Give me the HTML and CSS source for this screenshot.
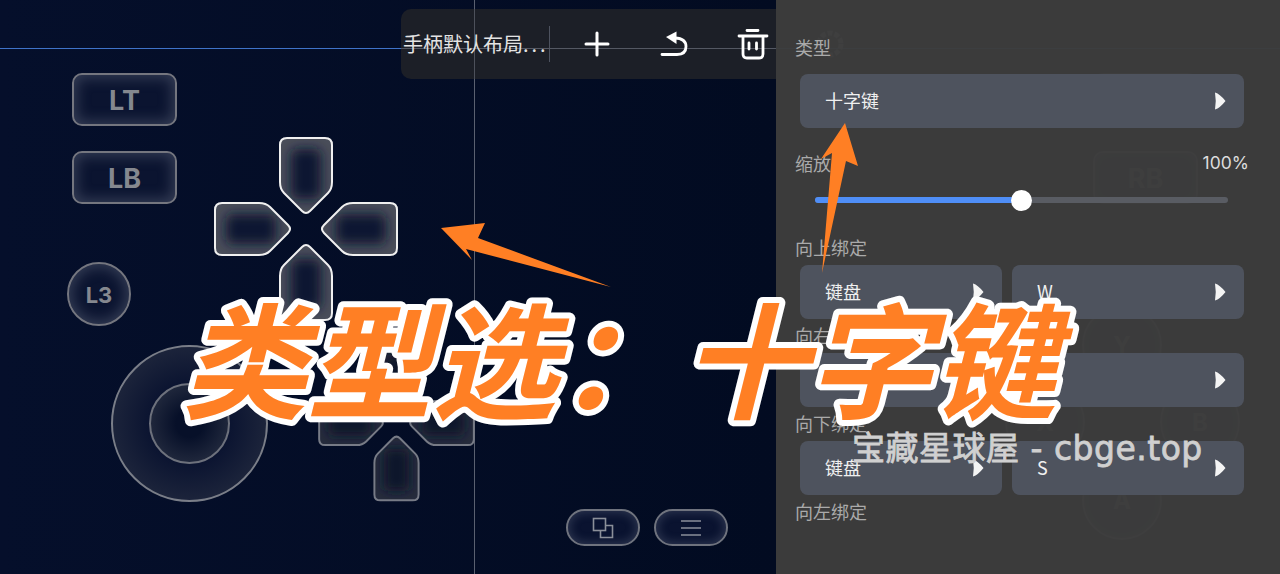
FILE: index.html
```html
<!DOCTYPE html>
<html lang="zh-CN">
<head>
    <meta charset="UTF-8">
    <title>手柄布局编辑</title>
    <link rel="stylesheet" href="styles.css">
</head>
<body>
    <div class="screen">
        <!-- guide lines -->
        <div class="guide guide-h"></div>
        <div class="guide guide-v"></div>

        <!-- pads on the canvas -->
        <div class="pad pad-rect pad-lt">LT</div>
        <div class="pad pad-rect pad-lb">LB</div>
        <div class="pad pad-round pad-l3">L3</div>
        <div class="stick"><div class="stick-inner"></div></div>

        <div class="pad pad-rect pad-rt">RT</div>
        <div class="pad pad-rect pad-rb">RB</div>
        <div class="pad pad-round pad-face pad-y">Y</div>
        <div class="pad pad-round pad-face pad-x">X</div>
        <div class="pad pad-round pad-face pad-b">B</div>
        <div class="pad pad-round pad-face pad-a">A</div>

        <svg class="gear" width="28" height="28" viewBox="0 0 28 28">
            <circle cx="14" cy="14" r="11" stroke-dasharray="5 2"></circle>
        </svg>

        <svg class="dpads" width="776" height="574" viewBox="0 0 776 574">
            <defs>
                <filter id="soft" x="-60%" y="-60%" width="220%" height="220%">
                    <feGaussianBlur stdDeviation="6"></feGaussianBlur>
                </filter>
                <clipPath id="armClip">
                    <path d="M-19 -91H19Q26 -91 26 -84V-47Q26 -40 22 -36L4 -18Q0 -14 -4 -18L-22 -36Q-26 -40 -26 -47V-84Q-26 -91 -19 -91Z"></path>
                </clipPath>
                <g id="arm">
                    <path class="arm-fill" d="M-19 -91H19Q26 -91 26 -84V-47Q26 -40 22 -36L4 -18Q0 -14 -4 -18L-22 -36Q-26 -40 -26 -47V-84Q-26 -91 -19 -91Z"></path>
                    <g clip-path="url(#armClip)">
                        <rect class="arm-core" x="-15" y="-80" width="30" height="50" rx="6" filter="url(#soft)"></rect>
                    </g>
                    <path class="arm-line" d="M-19 -91H19Q26 -91 26 -84V-47Q26 -40 22 -36L4 -18Q0 -14 -4 -18L-22 -36Q-26 -40 -26 -47V-84Q-26 -91 -19 -91Z"></path>
                </g>
            </defs>
            <g class="dpad-on" transform="translate(306 229)">
                <use href="#arm"></use>
                <use href="#arm" transform="rotate(90)"></use>
                <use href="#arm" transform="rotate(180)"></use>
                <use href="#arm" transform="rotate(270)"></use>
            </g>
            <g class="dpad-off" transform="translate(396.5 423) scale(.85)">
                <use href="#arm"></use>
                <use href="#arm" transform="rotate(90)"></use>
                <use href="#arm" transform="rotate(180)"></use>
                <use href="#arm" transform="rotate(270)"></use>
            </g>
        </svg>

        <div class="pill pill-copy">
            <svg width="24" height="24" viewBox="0 0 24 24">
                <rect class="pill-icon" x="2.5" y="2.5" width="12" height="12"></rect>
                <path class="pill-icon" d="M14.5 9.5H21.5V21.5H9.5V14.5"></path>
            </svg>
        </div>
        <div class="pill pill-menu">
            <svg width="24" height="24" viewBox="0 0 24 24">
                <path class="pill-icon" d="M2 5H22M2 12H22M2 19H22"></path>
            </svg>
        </div>

        <!-- top toolbar -->
        <div class="toolbar">
            <div class="layout-name">手柄默认布局<span class="dots">...</span></div>
            <div class="divider"></div>
            <div class="tools">
                <svg width="28" height="28" viewBox="0 0 28 28">
                    <path class="tool-icon" d="M14 3V25M3 14H25"></path>
                </svg>
                <svg width="30" height="30" viewBox="0 0 30 30">
                    <path class="tool-icon tool-thin" d="M16 9Q27 9.500 27 17.500Q27 25.500 18 25.500H3"></path>
                    <path class="tool-solid" d="M17.500 2.500V15L7 8Z"></path>
                </svg>
                <svg width="32" height="32" viewBox="0 0 32 32">
                    <path class="tool-icon tool-thin" d="M2 8H30M10 2.500H21M6 9V26Q6 30 10 30H22Q26 30 26 26V9"></path>
                    <path class="tool-icon tool-thin" d="M12 15V21M19.500 15V21"></path>
                </svg>
            </div>
        </div>

        <!-- settings panel -->
        <div class="panel">
            <div class="field-label">类型</div>
            <div class="select select-type">
                <span>十字键</span>
                <svg class="caret" width="12" height="18" viewBox="0 0 12 18"><path d="M1 0.500Q6 2 11.500 9Q6 16 1 17.500Q2.500 9 1 0.500Z"></path></svg>
            </div>

            <div class="scale-head">
                <div class="field-label">缩放</div>
                <div class="scale-value">100%</div>
            </div>
            <div class="slider">
                <div class="slider-fill"></div>
                <div class="slider-thumb"></div>
            </div>

            <div class="field-label">向上绑定</div>
            <div class="bind">
                <div class="select"><span>键盘</span><svg class="caret" width="12" height="18" viewBox="0 0 12 18"><path d="M1 0.500Q6 2 11.500 9Q6 16 1 17.500Q2.500 9 1 0.500Z"></path></svg></div>
                <div class="select"><span>W</span><svg class="caret" width="12" height="18" viewBox="0 0 12 18"><path d="M1 0.500Q6 2 11.500 9Q6 16 1 17.500Q2.500 9 1 0.500Z"></path></svg></div>
            </div>

            <div class="field-label">向右绑定</div>
            <div class="bind">
                <div class="select"><span>键盘</span><svg class="caret" width="12" height="18" viewBox="0 0 12 18"><path d="M1 0.500Q6 2 11.500 9Q6 16 1 17.500Q2.500 9 1 0.500Z"></path></svg></div>
                <div class="select"><span>D</span><svg class="caret" width="12" height="18" viewBox="0 0 12 18"><path d="M1 0.500Q6 2 11.500 9Q6 16 1 17.500Q2.500 9 1 0.500Z"></path></svg></div>
            </div>

            <div class="field-label">向下绑定</div>
            <div class="bind">
                <div class="select"><span>键盘</span><svg class="caret" width="12" height="18" viewBox="0 0 12 18"><path d="M1 0.500Q6 2 11.500 9Q6 16 1 17.500Q2.500 9 1 0.500Z"></path></svg></div>
                <div class="select"><span>S</span><svg class="caret" width="12" height="18" viewBox="0 0 12 18"><path d="M1 0.500Q6 2 11.500 9Q6 16 1 17.500Q2.500 9 1 0.500Z"></path></svg></div>
            </div>

            <div class="field-label">向左绑定</div>
        </div>

        <!-- annotation on top of the screenshot -->
        <svg class="notes" width="1280" height="574" viewBox="0 0 1280 574">
            <polygon class="note-arrow" points="441,228 485,223 478,238 611,287 466,249 472,260"></polygon>
            <polygon class="note-arrow" points="845,123 858,166 846,161 822,273 832,153 821,159"></polygon>
            <text class="note-title" x="182" y="409">类型选：十字键</text>
        </svg>
        <div class="watermark">宝藏星球屋 - cbge.top</div>
    </div>
</body>
</html>
```

FILE: styles.css
```css
* {
    box-sizing: border-box;
}

body {
    margin: 0;
    background-color: #040e26;
    font-family: "Noto Sans CJK SC", "Liberation Sans", sans-serif;
}

.screen {
    position: relative;
    width: 1280px;
    height: 574px;
    overflow: hidden;
    background: linear-gradient(90deg, #050f2b, #020b21 776px);
}

.guide {
    position: absolute;
}

.guide-h {
    left: 0;
    top: 48px;
    width: 1280px;
    height: 1px;
    background-color: #3f73c9;
}

.guide-v {
    left: 474px;
    top: 0;
    width: 1px;
    height: 574px;
    background-color: #5a6070;
}

.gear {
    position: absolute;
    left: 816px;
    top: 30px;
}

.gear circle {
    fill: none;
    stroke: #9aa0ae;
    stroke-width: 5;
}

.pad {
    position: absolute;
    display: flex;
    align-items: center;
    justify-content: center;
    padding-top: 1px;
    border: 2px solid #74767f;
    background-color: #0b1430;
    color: #85888f;
    font-family: "Inter", "Liberation Sans", sans-serif;
    font-weight: 700;
    box-shadow: inset 0 0 14px 3px rgba(120, 128, 148, 0.38);
}

.pad-rect {
    width: 105px;
    height: 53px;
    border-radius: 10px;
    font-size: 27px;
}

.pad-round {
    border-radius: 50%;
    font-size: 22px;
}

.pad-lt {
    left: 72px;
    top: 73px;
}

.pad-lb {
    left: 72px;
    top: 151px;
}

.pad-l3 {
    left: 67px;
    top: 262px;
    width: 64px;
    height: 64px;
}

.pad-rt {
    left: 1093px;
    top: 73px;
}

.pad-rb {
    left: 1093px;
    top: 151px;
}

.pad-face {
    width: 80px;
    height: 80px;
    font-size: 24px;
}

.pad-y {
    left: 1082px;
    top: 305px;
}

.pad-x {
    left: 1005px;
    top: 382px;
}

.pad-b {
    left: 1160px;
    top: 382px;
}

.pad-a {
    left: 1082px;
    top: 460px;
}

.stick {
    position: absolute;
    left: 111px;
    top: 345px;
    width: 157px;
    height: 157px;
    display: flex;
    align-items: center;
    justify-content: center;
    border: 2px solid #7a7e88;
    border-radius: 50%;
    background: radial-gradient(circle, #0a1330 35%, #2a3143 100%);
}

.stick-inner {
    width: 81px;
    height: 81px;
    border: 2px solid #6d717c;
    border-radius: 50%;
    background: radial-gradient(circle, #071029 25%, #2e3547 100%);
}

.dpads {
    position: absolute;
    left: 0;
    top: 0;
}

/* values reach the shapes inside <use> by inheritance */
.dpad-on {
    --arm-fill: #4a4e5a;
    --arm-core: #0c1530;
    --arm-line: #f0f0f0;
    --arm-width: 2;
}

.dpad-off {
    --arm-fill: #262c3d;
    --arm-core: #0a1329;
    --arm-line: #777b86;
    --arm-width: 2.300;
}

.arm-fill {
    fill: var(--arm-fill);
}

.arm-core {
    fill: var(--arm-core);
}

.arm-line {
    fill: none;
    stroke: var(--arm-line);
    stroke-width: var(--arm-width);
}

.pill {
    position: absolute;
    top: 509px;
    width: 74px;
    height: 37px;
    display: flex;
    align-items: center;
    justify-content: center;
    border: 2px solid #6f737e;
    border-radius: 19px;
    background-color: #0a1330;
    box-shadow: inset 0 0 10px 2px rgba(120, 128, 148, 0.3);
}

.pill-copy {
    left: 566px;
}

.pill-menu {
    left: 654px;
}

.pill-icon {
    fill: none;
    stroke: #8b8f99;
    stroke-width: 1.600;
}

.toolbar {
    position: absolute;
    left: 401px;
    top: 9px;
    width: 375px;
    height: 70px;
    display: flex;
    align-items: center;
    border-radius: 10px 0 0 10px;
    background-color: #1c1f27;
}

/* the guides show through the toolbar */
.toolbar::before {
    content: "";
    position: absolute;
    left: 73px;
    top: 0;
    width: 1px;
    height: 70px;
    background-color: #4d515b;
}

.toolbar::after {
    content: "";
    position: absolute;
    left: 0;
    top: 39px;
    width: 375px;
    height: 1px;
    background-color: #545863;
}

.layout-name {
    position: relative;
    z-index: 1;
    width: 148px;
    padding-left: 2px;
    color: #e4e4e4;
    font-size: 20px;
    line-height: 24px;
    white-space: nowrap;
}

.dots {
    letter-spacing: 3px;
}

.divider {
    width: 1px;
    height: 36px;
    background-color: #4d525f;
}

.tools {
    position: relative;
    z-index: 1;
    display: flex;
    align-items: center;
    gap: 48px;
    margin-left: 33px;
}

.tool-icon {
    fill: none;
    stroke: #fff;
    stroke-width: 3;
    stroke-linecap: round;
}

.tool-thin {
    stroke-width: 2.800;
}

.tool-solid {
    fill: #fff;
}

.panel {
    position: absolute;
    left: 776px;
    top: 0;
    width: 504px;
    height: 574px;
    display: flex;
    flex-direction: column;
    padding: 35px 31px 0 19px;
    background-color: rgba(60, 60, 60, 0.975);
}

.field-label {
    height: 24px;
    color: #aaaaaa;
    font-size: 18px;
    line-height: 24px;
}

.select {
    flex: 1;
    height: 54px;
    display: flex;
    align-items: center;
    justify-content: space-between;
    padding: 0 18px 0 25px;
    border-radius: 8px;
    background-color: rgba(79, 84, 95, 0.98);
    color: #f0f0f0;
    font-size: 18px;
}

.select span {
    padding-bottom: 3px;
}

.select-type {
    flex: none;
    margin: 15px 5px 23px;
}

.caret path {
    fill: #f4f4f4;
}

.scale-head {
    display: flex;
    justify-content: space-between;
}

.scale-value {
    color: #dddddd;
    font-family: "Inter", "Liberation Sans", sans-serif;
    font-size: 17.500px;
    line-height: 24px;
}

.slider {
    position: relative;
    height: 6px;
    margin: 22px 21px 32px 20px;
    border-radius: 3px;
    background-color: #595c63;
}

.slider-fill {
    width: 50%;
    height: 100%;
    border-radius: 3px;
    background-color: #4f8ef7;
}

.slider-thumb {
    position: absolute;
    left: 196px;
    top: -7.500px;
    width: 21px;
    height: 21px;
    border-radius: 50%;
    background-color: #fff;
}

.bind {
    display: flex;
    gap: 10px;
    margin: 6px 5px 4px;
}

.bind .select:first-child {
    flex: none;
    width: 202px;
}

.notes {
    position: absolute;
    left: 0;
    top: 0;
}

.note-arrow {
    fill: #ff7f24;
}

.note-title {
    fill: #ff7f24;
    stroke: #fff;
    stroke-width: 12px;
    stroke-linejoin: round;
    paint-order: stroke fill;
    font-family: "Noto Sans CJK SC", sans-serif;
    font-size: 125px;
    font-style: italic;
    font-weight: 700;
}

.watermark {
    position: absolute;
    left: 852px;
    top: 426px;
    color: #d0d0d0;
    font-family: "DejaVu Sans", "Noto Sans CJK SC", sans-serif;
    font-size: 33px;
    letter-spacing: 0.500px;
    line-height: 46px;
    white-space: nowrap;
    -webkit-text-stroke: 0.8px #d0d0d0;
}
```
